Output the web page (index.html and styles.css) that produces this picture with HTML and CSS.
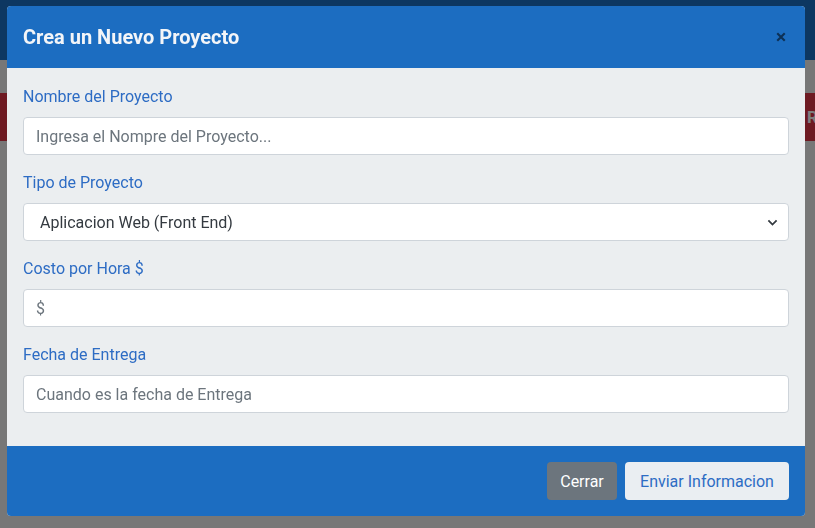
FILE: index.html
```html
<!DOCTYPE html>
<html lang="es">
<head>
<meta charset="utf-8">
<title>Crea un Nuevo Proyecto</title>
<link rel="stylesheet" href="styles.css">
</head>
<body>
<div class="page">
  <div class="navbar"></div>
  <div class="alert-row">
    <span class="alert-btn alert-left">b</span>
    <span class="alert-btn alert-right">Re</span>
  </div>
</div>
<div class="backdrop"></div>
<div class="modal">
  <div class="modal-header">
    <h5 class="modal-title">Crea un Nuevo Proyecto</h5>
    <button class="btn-close" type="button" aria-label="Close">
      <svg viewBox="0 0 16 16" width="10" height="10"><path d="M2 2 L14 14 M14 2 L2 14" stroke="#000" stroke-width="3.4" stroke-linecap="butt" fill="none"/></svg>
    </button>
  </div>
  <div class="modal-body">
    <div class="field">
      <label class="label">Nombre del Proyecto</label>
      <input class="control" type="text" placeholder="Ingresa el Nompre del Proyecto...">
    </div>
    <div class="field">
      <label class="label">Tipo de Proyecto</label>
      <div class="select">
        <span class="select-text">Aplicacion Web (Front End)</span>
        <svg class="chev" viewBox="0 0 16 16" width="11" height="11"><path d="M2 5 L8 11 L14 5" stroke="#343a40" stroke-width="2.6" fill="none"/></svg>
      </div>
    </div>
    <div class="field">
      <label class="label">Costo por Hora $</label>
      <input class="control" type="text" placeholder="$">
    </div>
    <div class="field">
      <label class="label">Fecha de Entrega</label>
      <input class="control" type="text" placeholder="Cuando es la fecha de Entrega">
    </div>
  </div>
  <div class="modal-footer">
    <button class="btn btn-gray" type="button">Cerrar</button>
    <button class="btn btn-light" type="button">Enviar Informacion</button>
  </div>
</div>
</body>
</html>
```
FILE: styles.css
```css
* { box-sizing: border-box; }
html, body { margin: 0; padding: 0; }
body {
  width: 815px;
  height: 528px;
  overflow: hidden;
  background: #eeeeee;
  font-family: "Roboto", "Liberation Sans", sans-serif;
}
.page { display: flex; flex-direction: column; }
.navbar { height: 60px; background: #1b6ec2; }
.alert-row {
  margin-top: 33px;
  height: 48px;
  display: flex;
  justify-content: space-between;
  align-items: center;
}
.alert-btn {
  height: 48px;
  display: flex;
  align-items: center;
  background: #dc3545;
  color: #fff;
  font-weight: 700;
  font-size: 17px;
}
.alert-left { padding-right: 10px; justify-content: flex-end; width: 40px; margin-left: -30px; }
.alert-right { padding-left: 2px; width: 30px; margin-right: -20px; }
.backdrop {
  position: fixed;
  inset: 0;
  background: rgba(0, 0, 0, 0.5);
}
.modal {
  position: fixed;
  left: 7px;
  top: 6px;
  width: 798px;
  border-radius: 4px;
  overflow: hidden;
  background: #ebeef0;
}
.modal-header {
  height: 62px;
  padding: 16px;
  background: #1c6dc1;
  display: flex;
  align-items: center;
}
.modal-title {
  margin: 0;
  font-size: 20px;
  line-height: 30px;
  font-weight: 700;
  color: #f3f5f8;
}
.btn-close {
  margin: -8px -8px -8px auto;
  width: 32px;
  height: 32px;
  padding: 0;
  border: 0;
  background: transparent;
  opacity: 0.55;
  display: flex;
  align-items: center;
  justify-content: center;
}
.modal-body {
  padding: 17px 16px 33px;
  display: flex;
  flex-direction: column;
  gap: 16px;
}
.field { display: flex; flex-direction: column; }
.label {
  font-size: 16px;
  line-height: 24px;
  margin-bottom: 8px;
  color: #2d6cc4;
}
.control {
  height: 38px;
  width: 100%;
  padding: 6px 12px;
  border: 1px solid #ced4da;
  border-radius: 4px;
  background: #fff;
  font-family: inherit;
  font-size: 16px;
  color: #495057;
  outline: none;
}
.control::placeholder { color: #6c757d; opacity: 1; }
.select {
  height: 38px;
  padding: 0 10px 0 16px;
  border: 1px solid #ced4da;
  border-radius: 4px;
  background: #fff;
  display: flex;
  align-items: center;
  justify-content: space-between;
}
.select-text { font-size: 16px; color: #343a40; }
.chev { display: block; }
.modal-footer {
  height: 70px;
  padding: 16px;
  background: #1c6dc1;
  display: flex;
  justify-content: flex-end;
  align-items: center;
  gap: 8px;
}
.btn {
  height: 38px;
  border: 0;
  border-radius: 4px;
  font-family: inherit;
  font-size: 16px;
}
.btn-gray { background: #6c757d; color: #fff; width: 70px; padding: 0; }
.btn-light { background: #eaeef2; color: #2d6cc4; width: 164px; padding: 0; }
```
